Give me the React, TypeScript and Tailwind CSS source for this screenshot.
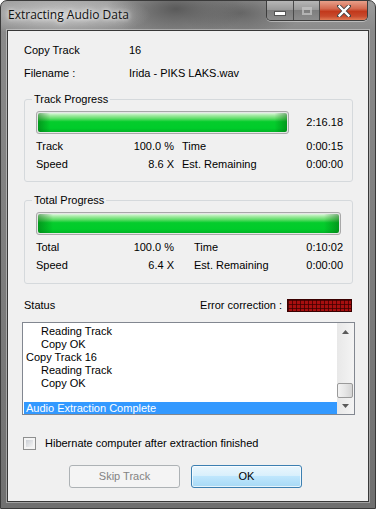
import React from "react";

const font = "font-['Liberation_Sans',Arial,sans-serif]";

function Bar({ w }: { w: string }) {
  return (
    <div
      className={`${w} h-[23px] rounded-[3px] border border-[#a8a8a8] p-[1px] bg-[#e6e6e6]`}
    >
      <div className="w-full h-full rounded-[2px] bg-[linear-gradient(90deg,rgba(0,90,10,0.45)_0%,rgba(0,90,10,0)_5%,rgba(0,90,10,0)_95%,rgba(0,90,10,0.45)_100%),linear-gradient(180deg,#dff7df_0%,#9eea9e_14%,#5cdc66_30%,#05cc2c_46%,#00cc2a_80%,#00b425_100%)]" />
    </div>
  );
}

function Group({
  title,
  h,
  children,
}: {
  title: string;
  h: string;
  children: React.ReactNode;
}) {
  return (
    <div className={`relative w-[329px] ${h} rounded-[3px] border border-[#d5d9dc]`}>
      <span className="absolute left-[7px] top-[-7px] bg-[#f0f0f0] px-[2px] leading-[13px] text-[#000]">
        {title}
      </span>
      {children}
    </div>
  );
}

function Row({
  a,
  av,
  b,
  bv,
  gap,
}: {
  a: string;
  av: string;
  b: string;
  bv: string;
  gap: string;
}) {
  return (
    <div className="flex h-[18px] items-center pl-[11px] pr-[9px]">
      <div className="w-[138px] flex justify-between">
        <span>{a}</span>
        <span>{av}</span>
      </div>
      <div className={`${gap} flex-1 flex justify-between`}>
        <span>{b}</span>
        <span>{bv}</span>
      </div>
    </div>
  );
}

export default function App() {
  return (
    <div
      className={`relative w-[376px] h-[509px] overflow-hidden rounded-t-[7px] border border-[#3a3a3a] bg-[radial-gradient(ellipse_90px_22px_at_60px_14px,#c4c4c4_0%,rgba(196,196,196,0)_100%),radial-gradient(ellipse_70px_30px_at_175px_8px,#5a5a5a_0%,rgba(90,90,90,0)_100%),radial-gradient(ellipse_60px_26px_at_240px_12px,#666_0%,rgba(100,100,100,0)_100%),linear-gradient(180deg,#9c9c9c_0px,#8a8a8a_30px,#707070_100%)] ${font}`}
    >
      {/* Title bar */}
      <div className="flex h-[29px] items-start">
        <div className="pl-[7px] pt-[6px] text-[12px] leading-[16px] text-[#111] font-['Open_Sans','Liberation_Sans',sans-serif] [text-shadow:0_0_8px_#ffffff,0_0_4px_#ffffff]">
          Extracting Audio Data
        </div>
        <div className="ml-auto mr-[7px] flex h-[20px] rounded-b-[5px] border border-t-0 border-[#3d3d3d] overflow-hidden shadow-[0_1px_0_rgba(255,255,255,0.4)]">
          <div className="w-[27px] flex items-center justify-center border-r border-[#4a4a4a] bg-[linear-gradient(180deg,#b6b6b6_0%,#9a9a9a_45%,#7e7e7e_50%,#8c8c8c_100%)]">
            <div className="mt-[5px] w-[10px] h-[3px] bg-white border border-[#555] box-content" />
          </div>
          <div className="w-[26px] flex items-center justify-center border-r border-[#4a4a4a] bg-[linear-gradient(180deg,#b6b6b6_0%,#9a9a9a_45%,#7e7e7e_50%,#8c8c8c_100%)]">
            <div className="w-[10px] h-[8px] border-[2px] border-[#c8c8c8] border-t-[3px] opacity-70" />
          </div>
          <div className="w-[47px] flex items-center justify-center bg-[linear-gradient(180deg,#e8a08a_0%,#d46a50_40%,#c2391c_55%,#c84a2c_80%,#e07a55_100%)]">
            <svg width="14" height="12" viewBox="0 0 14 12">
              <path
                d="M2 1 L12 11 M12 1 L2 11"
                stroke="#444"
                strokeWidth="4"
                strokeLinecap="square"
              />
              <path
                d="M2.5 1.5 L11.5 10.5 M11.5 1.5 L2.5 10.5"
                stroke="#fff"
                strokeWidth="2.4"
                strokeLinecap="square"
              />
            </svg>
          </div>
        </div>
      </div>

      {/* Client area */}
      <div className="mx-[6px] h-[472px] border border-[#383838] bg-[#f0f0f0] shadow-[0_0_0_1px_rgba(255,255,255,0.35)] text-[11px] text-black pl-[16px]">
        <div className="mt-[13px] flex h-[13px] leading-[13px]">
          <span className="w-[105px]">Copy Track</span>
          <span>16</span>
        </div>
        <div className="mt-[10px] flex h-[13px] leading-[13px]">
          <span className="w-[105px]">Filename :</span>
          <span>Irida - PIKS LAKS.wav</span>
        </div>

        <div className="mt-[19px]">
          <Group title="Track Progress" h="h-[83px]">
            <div className="flex items-center pt-[11px] pl-[11px] pr-[9px]">
              <Bar w="w-[253px]" />
              <span className="ml-auto">2:16.18</span>
            </div>
            <div className="mt-[3px]">
              <Row a="Track" av="100.0 %" b="Time" bv="0:00:15" gap="ml-[8px]" />
              <Row a="Speed" av="8.6 X" b="Est. Remaining" bv="0:00:00" gap="ml-[8px]" />
            </div>
          </Group>
        </div>

        <div className="mt-[18px]">
          <Group title="Total Progress" h="h-[84px]">
            <div className="flex items-center pt-[11px] pl-[11px]">
              <Bar w="w-[305px]" />
            </div>
            <div className="mt-[3px]">
              <Row a="Total" av="100.0 %" b="Time" bv="0:10:02" gap="ml-[20px]" />
              <Row a="Speed" av="6.4 X" b="Est. Remaining" bv="0:00:00" gap="ml-[20px]" />
            </div>
          </Group>
        </div>

        <div className="mt-[14px] flex h-[14px] w-[328px] items-center">
          <span>Status</span>
          <span className="ml-auto">Error correction :</span>
          <div className="ml-[5px] w-[65px] h-[13px] border border-[#3a0000] bg-[#a80f0f] bg-[repeating-linear-gradient(90deg,rgba(60,0,0,0.75)_0px,rgba(60,0,0,0.75)_1px,transparent_1px,transparent_4px),repeating-linear-gradient(180deg,rgba(60,0,0,0.75)_0px,rgba(60,0,0,0.75)_1px,transparent_1px,transparent_4px)]" />
        </div>

        {/* List box */}
        <div className="mt-[10px] ml-[-2px] w-[333px] h-[93px] border border-[#828790] bg-white flex">
          <div className="flex-1 pt-[2px] leading-[13px] overflow-hidden">
            <div className="pl-[18px] h-[13px]">Reading Track</div>
            <div className="pl-[18px] h-[13px]">Copy OK</div>
            <div className="pl-[3px] h-[13px]">Copy Track 16</div>
            <div className="pl-[18px] h-[13px]">Reading Track</div>
            <div className="pl-[18px] h-[13px]">Copy OK</div>
            <div className="h-[12px]" />
            <div className="ml-[1px] pl-[2px] h-[13px] bg-[#3399ff] text-white">
              Audio Extraction Complete
            </div>
          </div>
          <div className="w-[17px] flex flex-col bg-[linear-gradient(90deg,#e8e8e8,#f4f4f4)]">
            <div className="h-[17px] flex items-center justify-center">
              <svg width="7" height="4" viewBox="0 0 7 4">
                <path d="M0 4 L3.5 0 L7 4 Z" fill="#5a5a5a" />
              </svg>
            </div>
            <div className="flex-1 relative">
              <div className="absolute left-[0px] right-[1px] top-[43px] h-[15px] rounded-[2px] border border-[#9a9a9a] bg-[linear-gradient(90deg,#f3f3f3_0%,#e6e6e6_50%,#d4d4d4_100%)]" />
            </div>
            <div className="h-[17px] flex items-center justify-center">
              <svg width="7" height="4" viewBox="0 0 7 4">
                <path d="M0 0 L3.5 4 L7 0 Z" fill="#5a5a5a" />
              </svg>
            </div>
          </div>
        </div>

        {/* Checkbox */}
        <div className="mt-[22px] ml-[-1px] flex items-center h-[13px]">
          <div className="w-[13px] h-[13px] border border-[#8e8f8f] bg-[#f4f4f4] p-[2px]">
            <div className="w-full h-full bg-[linear-gradient(135deg,#cbcfd5_0%,#f4f4f4_100%)]" />
          </div>
          <span className="ml-[9px]">Hibernate computer after extraction finished</span>
        </div>

        {/* Buttons */}
        <div className="mt-[15px] ml-[45px] flex gap-[11px]">
          <div className="w-[111px] h-[23px] rounded-[3px] border border-[#adb2b5] bg-[#f4f4f4] flex items-center justify-center text-[#838383]">
            Skip Track
          </div>
          <div className="w-[111px] h-[23px] rounded-[3px] border border-[#3c7fb1] bg-[linear-gradient(180deg,#eaf6fd_0%,#d9f0fc_45%,#bee6fd_50%,#a7d9f5_100%)] shadow-[inset_0_0_0_1px_rgba(255,255,255,0.7)] flex items-center justify-center text-black">
            OK
          </div>
        </div>
      </div>
    </div>
  );
}
